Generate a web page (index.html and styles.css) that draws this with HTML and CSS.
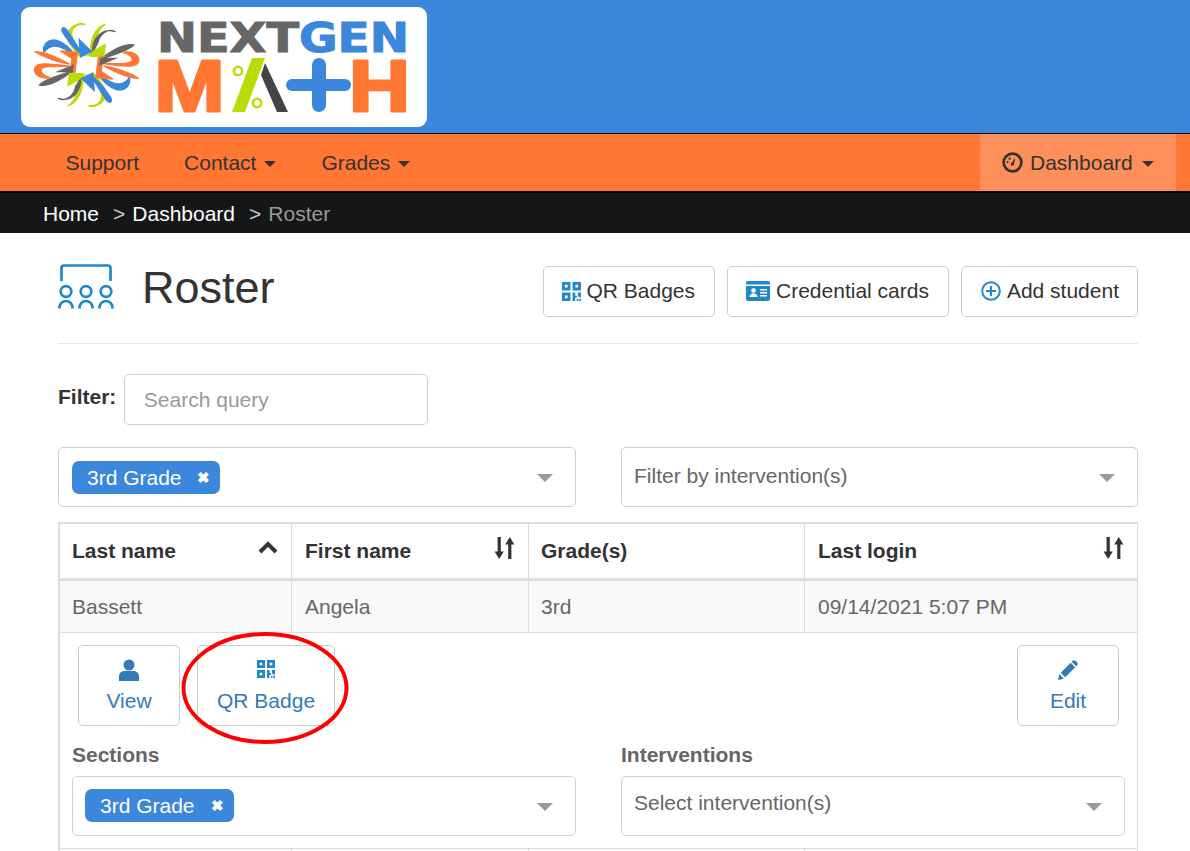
FILE: index.html
```html
<!DOCTYPE html>
<html lang="en">
<head>
<meta charset="utf-8">
<title>Roster</title>
<link rel="stylesheet" href="styles.css">
</head>
<body>
<svg class="defs">
  <defs>
    <g id="qr">
      <path fill-rule="evenodd" d="M0 0h8v8H0zM2.700 2.700v2.600h2.600V2.700zM10 0h8v8h-8zM12.700 2.700v2.600h2.600V2.700zM0 10h8v8H0zM2.700 12.700v2.600h2.600v-2.600z"/>
      <path d="M10 10h2.500v3H15v-3h3v4.500h-2.500V13H14v2h-1.600v3H10zM14 15.800h1.600V18H14zM16.400 15.800H18V18h-1.600z"/>
    </g>
    <g id="half" stroke-width="4" stroke-linejoin="round">
      <g fill="#b9dc08" stroke="#b9dc08">
        <path d="M165 28C135 25 118 45 128 70C135 92 150 105 175 130L150 125C130 105 110 75 115 55C120 35 145 20 165 28Z"/>
        <path d="M225 28C205 40 195 70 195 110L180 125C180 85 190 40 225 28Z"/>
      </g>
      <g fill="#3a87dc" stroke="#3a87dc">
        <path d="M100 38C88 45 103 58 113 74C123 92 140 104 160 122C147 103 137 85 122 63C114 51 112 40 100 38Z"/>
        <path d="M42 112C36 90 55 70 80 76C105 83 125 105 140 128C115 106 95 93 75 93C62 93 50 100 42 112Z"/>
      </g>
      <g fill="#666" stroke="#666">
        <path d="M255 50C233 38 208 58 203 85L188 110C186 75 213 36 255 50Z"/>
        <path d="M312 90C285 84 250 103 212 132C245 120 288 112 312 90Z"/>
      </g>
      <g fill="#ff7733" stroke="#ff7733">
        <path d="M280 112C305 106 330 120 326 140C320 160 285 154 220 146C270 146 303 148 307 135C308 125 295 116 280 112Z"/>
        <path d="M325 190C290 168 250 158 222 153C262 175 295 190 325 190Z"/>
        <path d="M92 108L142 112L135 172L122 176L126 130Z"/>
      </g>
      <path fill="#b9dc08" stroke="#b9dc08" d="M226 88L222 124L170 124L192 108Z"/>
      <path fill="#666" d="M75 172L132 148L128 172Z"/>
      <path fill="#3a87dc" d="M145 68L188 110L150 128Z"/>
    </g>
    <path id="sort" d="M3.600 0h3.200v14.500h3L5.200 22 .6 14.500h3zM17.400 22h-3.200V7.500h-3L15.800 0l4.600 7.500h-3z"/>
  </defs>
</svg>

<header class="brand">
  <div class="logo-card">
    <svg class="logo" viewBox="0 0 406 120" role="img" aria-label="NextGen Math logo">
      <g transform="translate(9 8) scale(.3333)">
        <use href="#half"/>
        <use href="#half" transform="rotate(180 170 150)"/>
        <circle cx="170" cy="150" r="28" fill="#fff"/>
      </g>
      <text class="lg-next" x="136" y="45" textLength="142" lengthAdjust="spacingAndGlyphs">NEXT</text>
      <text class="lg-gen" x="278" y="45" textLength="110" lengthAdjust="spacingAndGlyphs">GEN</text>
      <text class="lg-big" x="133.500" y="103.500" textLength="70" lengthAdjust="spacingAndGlyphs">M</text>
      <path d="M211 105H224L244 51H231Z" fill="#b9dc08"/>
      <path d="M244 56L267 105H256L240 68Z" fill="#444"/>
      <circle cx="217" cy="64" r="4.200" fill="none" stroke="#b9dc08" stroke-width="2.500"/>
      <circle cx="236" cy="96" r="4.200" fill="none" stroke="#b9dc08" stroke-width="2.500"/>
      <path d="M298 58v40" stroke="#3a87dc" stroke-width="14" stroke-linecap="round" fill="none"/>
      <path d="M271 78h53" stroke="#3a87dc" stroke-width="12" stroke-linecap="round" fill="none"/>
      <text class="lg-big" x="328" y="103.500" textLength="61" lengthAdjust="spacingAndGlyphs">H</text>
    </svg>
  </div>
</header>

<nav class="navbar">
  <ul class="nav-list">
    <li class="nav-item">Support</li>
    <li class="nav-item">Contact <span class="caret"></span></li>
    <li class="nav-item">Grades <span class="caret"></span></li>
  </ul>
  <div class="nav-item nav-active">
    <svg class="gauge" viewBox="0 0 22 22"><circle cx="11" cy="11" r="9.300" fill="none" stroke="#333" stroke-width="2.800"/><circle cx="11" cy="12.500" r="1.800" fill="#333"/><path d="M11 12.500l2.500-5" stroke="#333" stroke-width="1.500"/><circle cx="5.800" cy="10.500" r="1.200" fill="#333"/><circle cx="8" cy="7" r="1.200" fill="#333"/></svg>
    Dashboard <span class="caret"></span>
  </div>
</nav>

<ol class="breadcrumb">
  <li>Home</li>
  <li class="crumb-sep">&gt;</li>
  <li>Dashboard</li>
  <li class="crumb-sep">&gt;</li>
  <li class="crumb-current">Roster</li>
</ol>

<main class="page">
  <div class="title-row">
    <svg class="roster-icon" viewBox="0 0 56 46" fill="none" stroke="#1e88c9" stroke-width="2.700">
      <path d="M3.500 17V4Q3.500 1.500 6 1.500H50Q52.500 1.500 52.500 4V17"/>
      <circle cx="8" cy="27.500" r="5.300"/><circle cx="28" cy="27.500" r="5.300"/><circle cx="48" cy="27.500" r="5.300"/>
      <path d="M1.500 44.500v-1a6.500 6.500 0 0 1 13 0v1M21.500 44.500v-1a6.500 6.500 0 0 1 13 0v1M41.500 44.500v-1a6.500 6.500 0 0 1 13 0v1"/>
    </svg>
    <h1 class="title">Roster</h1>
    <div class="actions">
      <button class="btn"><svg class="ic-qr" viewBox="0 0 18 18"><use href="#qr"/></svg>QR Badges</button>
      <button class="btn"><svg class="ic-card" viewBox="0 0 24 20"><path d="M2 0h20a2 2 0 0 1 2 2v1.500H0V2a2 2 0 0 1 2-2zM0 5h24v13a2 2 0 0 1-2 2H2a2 2 0 0 1-2-2z"/><circle cx="7.500" cy="9.500" r="2.300" fill="#fff"/><path d="M3.500 16c0-5 8-5 8 0z" fill="#fff"/><path d="M14 8h7v1.500h-7zM14 11h7v1.500h-7zM14 14h7v1.500h-7z" fill="#fff"/></svg>Credential cards</button>
      <button class="btn btn-add"><svg class="ic-plus" viewBox="0 0 20 20" fill="none" stroke="#1e88c9"><circle cx="10" cy="10" r="8.800" stroke-width="2"/><path d="M10 5v10M5 10h10" stroke-width="2.200"/></svg>Add student</button>
    </div>
  </div>
  <hr class="rule">

  <div class="filter-row">
    <label class="filter-label" for="q">Filter:</label>
    <input class="search" id="q" placeholder="Search query">
  </div>

  <div class="select-row">
    <div class="select"><span class="tag tag-top">3rd Grade <span class="tag-x">&#10006;</span></span><span class="select-arrow"></span></div>
    <div class="select"><span class="placeholder">Filter by intervention(s)</span><span class="select-arrow"></span></div>
  </div>

  <div class="table">
    <div class="tr thead">
      <div class="td">Last name<svg class="chev" viewBox="0 0 20 13"><path d="M2 11L10 3l8 8" fill="none" stroke="#333" stroke-width="4"/></svg></div>
      <div class="td">First name<svg class="sort" viewBox="0 0 21 22"><use href="#sort"/></svg></div>
      <div class="td td-tight">Grade(s)</div>
      <div class="td">Last login<svg class="sort" viewBox="0 0 21 22"><use href="#sort"/></svg></div>
    </div>
    <div class="tr row-main">
      <div class="td">Bassett</div>
      <div class="td">Angela</div>
      <div class="td td-tight">3rd</div>
      <div class="td">09/14/2021 5:07 PM</div>
    </div>
    <div class="detail">
      <div class="tool-row">
        <button class="tool"><svg class="ic-person" viewBox="0 0 20 22"><circle cx="10" cy="6" r="5.500"/><path d="M0 22v-4.500C0 13.500 3 12 6 12h8c3 0 6 1.500 6 5.500V22z"/></svg>View</button>
        <button class="tool"><svg class="ic-qr-tool" viewBox="0 0 18 18"><use href="#qr"/></svg>QR Badge</button>
        <button class="tool tool-edit"><svg class="ic-person" viewBox="0 0 22 22"><path d="M0 22l1.500-6.500L6.500 20.500zM3 14L14 3l5 5L8 19zM15.500 1.500C17 0 18 0 19.500 1L21 2.500c1 1.500 1 2.500-.5 4l-.5.500-5-5z"/></svg>Edit</button>
      </div>
      <div class="fields">
        <div class="field">
          <div class="field-label">Sections</div>
          <div class="select"><span class="tag">3rd Grade <span class="tag-x">&#10006;</span></span><span class="select-arrow"></span></div>
        </div>
        <div class="field">
          <div class="field-label">Interventions</div>
          <div class="select"><span class="placeholder">Select intervention(s)</span><span class="select-arrow"></span></div>
        </div>
      </div>
    </div>
    <div class="tr row-tail"><div class="td"></div><div class="td"></div><div class="td"></div><div class="td"></div></div>
  </div>
</main>

<svg class="circle-note" viewBox="0 0 168 114"><ellipse cx="84" cy="57" rx="81.500" ry="54" fill="none" stroke="#f00" stroke-width="4"/></svg>
</body>
</html>
```
FILE: styles.css
```css
* { box-sizing: border-box; }
html, body { margin: 0; padding: 0; overflow: hidden; height: 851px; }
body { font-family: "Liberation Sans", Arial, sans-serif; font-size: 21px; color: #333; background: #fff; position: relative; }
.defs { display: none; }

.brand { height: 133px; background: #3a87dc; padding: 7px 0 0 21px; }
.logo-card { width: 406px; height: 120px; background: #fff; border-radius: 9px; }
.logo { display: block; width: 406px; height: 120px; }
.lg-next, .lg-gen { font-family: "DejaVu Sans", sans-serif; font-weight: 700; font-size: 40px; stroke-width: 1; }
.lg-next { fill: #666; stroke: #666; }
.lg-gen { fill: #3a87dc; stroke: #3a87dc; }
.lg-big { font-family: "Liberation Sans", sans-serif; font-weight: 700; font-size: 72px; fill: #ff7733; stroke: #ff7733; stroke-width: 3; stroke-linejoin: round; }

.navbar { height: 60px; background: #ff7733; border-top: 1px solid #111; border-bottom: 2px solid #000; display: flex; justify-content: space-between; padding: 0 14px 0 43px; }
.nav-list { list-style: none; display: flex; margin: 0; padding: 0; }
.nav-item { display: flex; align-items: center; gap: 8px; padding: 0 22.500px; color: #333; height: 57px; white-space: nowrap; }
.nav-active { background: #ff8f5a; width: 196px; padding: 0 0 0 22px; gap: 7px; }
.nav-active .caret { margin-left: 2px; }
.caret { display: inline-block; width: 0; height: 0; border-left: 6.500px solid transparent; border-right: 6.500px solid transparent; border-top: 6.500px solid #333; margin-top: 3px; }
.gauge { width: 21px; height: 21px; }

.breadcrumb { list-style: none; height: 40px; margin: 0; padding: 1px 0 0 43px; background: #141618; display: flex; align-items: center; color: #fff; }
.crumb-sep { color: #ccc; margin: 0 7px 0 14px; }
.crumb-current { color: #999; }

.page { padding: 0 52px 0 58px; }
.title-row { display: flex; align-items: center; height: 110px; }
.roster-icon { width: 56px; height: 46px; margin-top: -2px; }
.title { font-size: 45px; font-weight: 400; margin: -2px 0 0 28px; line-height: 1; }
.actions { display: flex; gap: 12px; margin-left: auto; margin-top: 6px; }
.btn { height: 51px; display: flex; align-items: center; padding: 0 19px 0 18px; background: #fff; border: 1px solid #ccc; border-radius: 5px; font: inherit; color: #333; white-space: nowrap; }
.btn-add { padding: 0 18px 0 19px; }
.ic-qr { width: 19px; height: 19px; margin-right: 5px; fill: #1e88c9; }
.ic-card { width: 24px; height: 20px; margin-right: 6px; fill: #1e88c9; }
.ic-plus { width: 20px; height: 20px; margin-right: 6px; }
.rule { border: 0; border-top: 1px solid #e6e6e6; margin: 0; }

.filter-row { display: flex; align-items: center; gap: 7.500px; margin-top: 30px; }
.filter-label { font-weight: 700; font-size: 21px; margin-top: -6px; }
.search { width: 304px; height: 51px; border: 1px solid #ccc; border-radius: 5px; padding: 0 19px; font: inherit; color: #333; }
.search::placeholder { color: #999; opacity: 1; }

.select-row { display: grid; grid-template-columns: 518px 517px; column-gap: 45px; margin-top: 22px; }
.select { height: 60px; border: 1px solid #ccd0d5; border-radius: 5px; display: flex; align-items: center; justify-content: space-between; padding: 0 22px 0 12px; }
.tag { background: #3a87dc; color: #fff; height: 33px; border-radius: 7px; display: flex; align-items: center; justify-content: space-between; width: 149px; padding: 0 10px 0 15px; margin-top: 1px; }
.tag-top { margin-left: 1px; width: 148px; }
.tag-x { font-size: 15px; font-weight: 700; line-height: 1; }
.select-arrow { width: 0; height: 0; border-left: 8px solid transparent; border-right: 8px solid transparent; border-top: 8px solid #999; margin-top: 2px; }
.placeholder { color: #666; margin-top: -2px; }
.fields .placeholder { margin-top: -6px; }
.fields .tag { margin-top: -1px; }

.table { margin-top: 15px; border: solid #ddd; border-width: 2px 1px 0 2px; }
.tr { display: grid; grid-template-columns: 231px 237px 276px 333px; }
.td { padding: 0 13px; display: flex; align-items: center; justify-content: space-between; border-left: 1px solid #ddd; white-space: nowrap; }
.td:first-child { border-left: 0; padding-left: 12px; }
.td-tight { padding-left: 12px; }
.thead { height: 57px; border-bottom: 3px solid #ddd; font-weight: 700; }
.row-main { height: 52px; background: #f9f9f9; border-bottom: 1px solid #ddd; color: #666; }
.chev { width: 20px; height: 13px; margin: -8px 0 0 0; }
.sort { width: 21px; height: 22px; margin: -7px 0 0 0; fill: #333; }

.detail { height: 216px; padding: 12px 12px 0; border-bottom: 1px solid #ddd; }
.tool-row { display: flex; gap: 17px; padding: 0 6px; }
.tool { min-width: 102px; height: 81px; display: flex; flex-direction: column; align-items: center; justify-content: flex-end; padding: 0 19px 12px; background: #fff; border: 1px solid #ccc; border-radius: 5px; font: inherit; color: #337ab7; white-space: nowrap; }
.ic-person { width: 20px; height: 22px; fill: #337ab7; margin-bottom: 8px; }
.ic-qr-tool { width: 18px; height: 18px; fill: #1e88c9; margin-bottom: 11px; }
.tool-edit { margin-left: auto; }
.fields { display: grid; grid-template-columns: 504px 504px; column-gap: 45px; margin-top: 17px; }
.field-label { font-weight: 700; color: #666; margin-bottom: 9px; }
.row-tail { height: 20px; background: #f9f9f9; }

.circle-note { position: absolute; left: 181px; top: 631px; width: 168px; height: 114px; pointer-events: none; }
```
